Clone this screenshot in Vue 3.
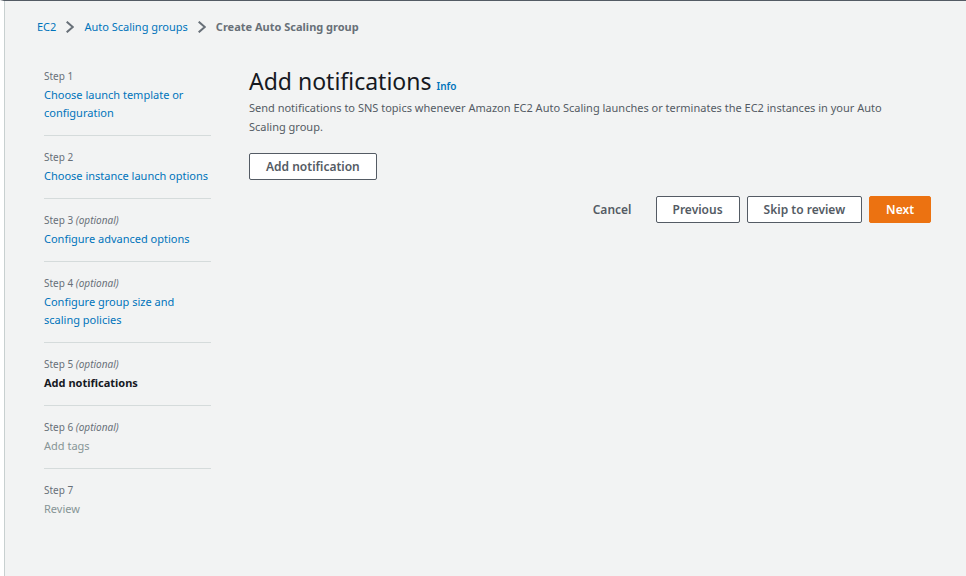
<script setup>
const steps = [
  { title: 'Choose launch template or configuration', state: 'link' },
  { title: 'Choose instance launch options', state: 'link' },
  { title: 'Configure advanced options', optional: true, state: 'link' },
  { title: 'Configure group size and scaling policies', optional: true, state: 'link' },
  { title: 'Add notifications', optional: true, state: 'current' },
  { title: 'Add tags', optional: true, state: 'disabled' },
  { title: 'Review', state: 'disabled' },
]
</script>

<template>
  <div class="page">
    <nav class="breadcrumbs" aria-label="Breadcrumbs">
      <a href="#ec2">EC2</a>
      <svg class="chevron" viewBox="0 0 8 12" aria-hidden="true"><path d="M0.7 0.7 L6.8 6 L0.7 11.3" /></svg>
      <a href="#groups">Auto Scaling groups</a>
      <svg class="chevron" viewBox="0 0 8 12" aria-hidden="true"><path d="M0.7 0.7 L6.8 6 L0.7 11.3" /></svg>
      <span class="here">Create Auto Scaling group</span>
    </nav>

    <div class="wizard">
      <ol class="steps">
        <li v-for="(step, i) in steps" :key="i" class="step">
          <div class="label">Step {{ i + 1 }} <em v-if="step.optional">(optional)</em></div>
          <a v-if="step.state === 'link'" class="title" :href="`#step-${i + 1}`">{{ step.title }}</a>
          <span v-else class="title" :class="step.state">{{ step.title }}</span>
        </li>
      </ol>

      <main class="content">
        <div class="heading">
          <h1>Add notifications</h1>
          <a class="info" href="#info">Info</a>
        </div>
        <p class="description">
          Send notifications to SNS topics whenever Amazon EC2 Auto Scaling launches or terminates the EC2 instances in your Auto Scaling group.
        </p>
        <button class="btn" type="button">Add notification</button>
        <div class="actions">
          <button class="btn plain" type="button">Cancel</button>
          <button class="btn" type="button">Previous</button>
          <button class="btn" type="button">Skip to review</button>
          <button class="btn primary" type="button">Next</button>
        </div>
      </main>
    </div>
  </div>
</template>

<style>
body {
  background: #f2f3f3;
}
</style>

<style scoped>
.page {
  box-sizing: border-box;
  min-height: 100vh;
  padding: 17px 35px 32px 32px;
  border-top: 1px solid #545b64;
  border-left: 4px solid #fff;
  box-shadow: inset 1px 0 #c8d0d0;
  background: #f2f3f3;
  color: #545b64;
  font-family: "Noto Sans", sans-serif;
  font-size: 11px;
  line-height: 18px;
}
a {
  color: #0073bb;
  text-decoration: none;
}
.breadcrumbs {
  display: flex;
  align-items: center;
  padding-left: 1px;
}
.chevron {
  width: 8px;
  height: 12px;
  margin: 0 10px;
  fill: none;
  stroke: #687078;
  stroke-width: 2;
}
.here {
  color: #687078;
  font-weight: 700;
}
.wizard {
  display: flex;
  gap: 38px;
  padding: 31px 0 0 8px;
}
.steps {
  flex: none;
  width: 167px;
  margin: 0;
  padding: 0;
  list-style: none;
}
.step {
  padding-bottom: 13px;
}
.step + .step {
  padding-top: 12px;
  border-top: 1px solid #d5dbdb;
}
.label {
  padding-bottom: 1px;
  font-size: 10px;
  color: #687078;
}
.title {
  display: block;
}
.current {
  color: #16191f;
  font-weight: 700;
}
.disabled {
  color: #879596;
}
.content {
  flex: 1;
  min-width: 0;
}
.heading {
  display: flex;
  align-items: baseline;
  gap: 5px;
}
h1 {
  margin: 0;
  color: #16191f;
  font-size: 23px;
  font-weight: 400;
  line-height: 28px;
}
.info {
  font-size: 10px;
  font-weight: 600;
}
.description {
  margin: 3px 0 17px;
  padding-right: 24px;
  line-height: 19px;
}
.btn {
  box-sizing: border-box;
  height: 27px;
  padding: 0 16px;
  border: 1px solid #545b64;
  border-radius: 2px;
  background: #fff;
  color: #545b64;
  font-family: inherit;
  font-size: 12px;
  font-weight: 600;
  line-height: 18px;
}
.actions {
  display: flex;
  justify-content: flex-end;
  gap: 7px;
  margin-top: 16px;
}
.plain {
  border-color: transparent;
  background: transparent;
}
.primary {
  border-color: #ec7211;
  background: #ec7211;
  color: #fff;
}
</style>
